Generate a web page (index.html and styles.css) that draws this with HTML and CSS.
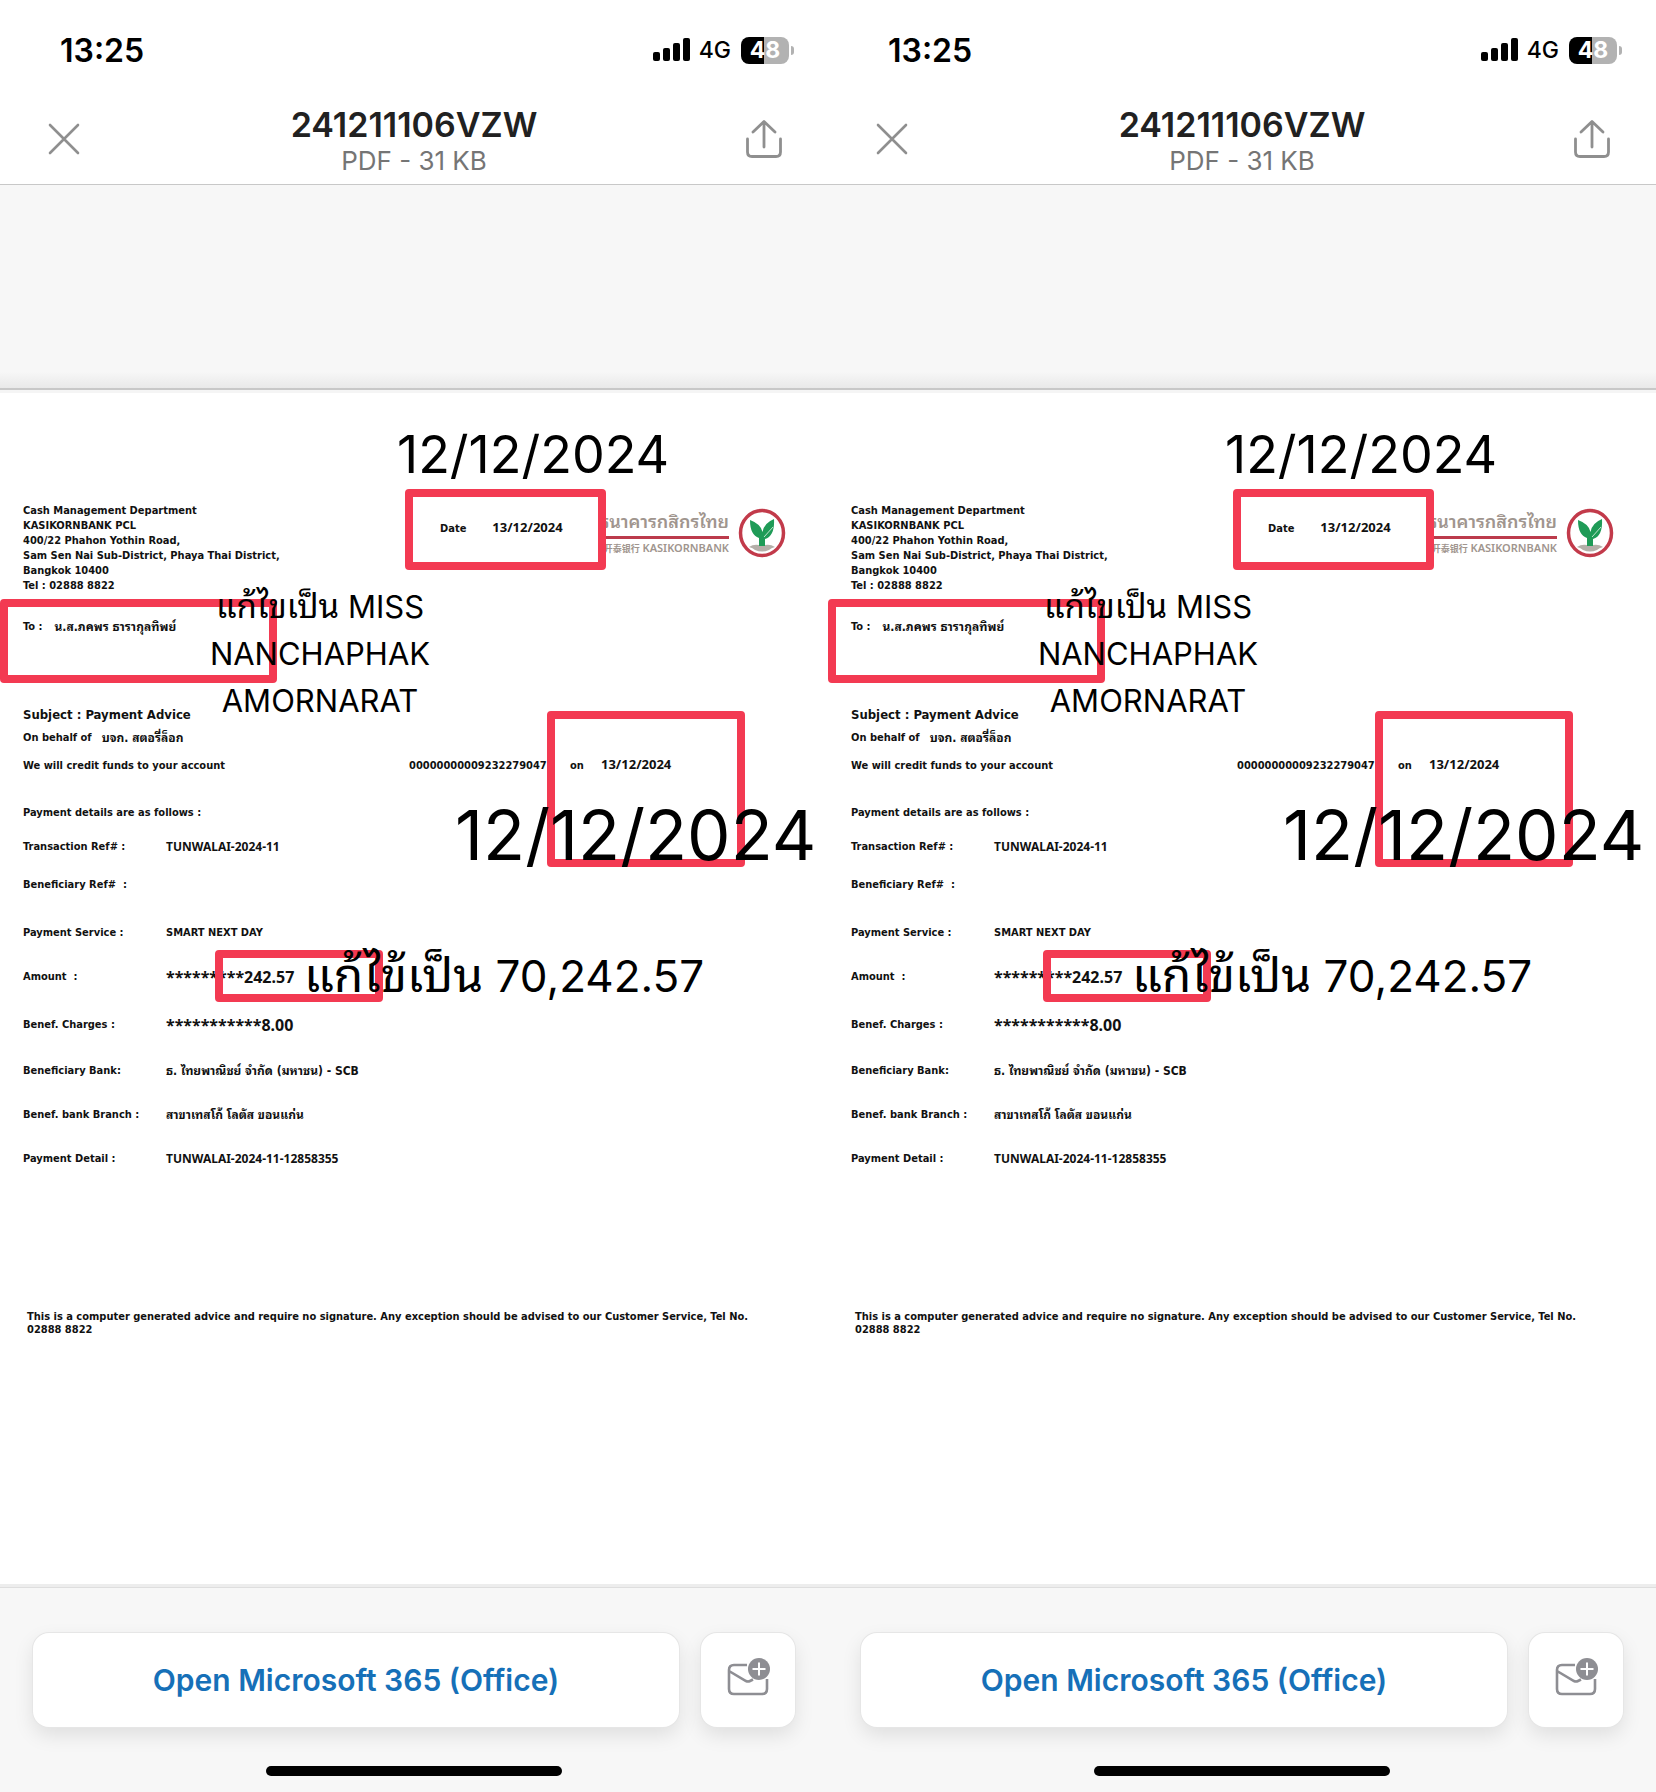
FILE: index.html
```html
<!DOCTYPE html>
<html lang="en">
<head>
<meta charset="utf-8">
<meta name="viewport" content="width=device-width, initial-scale=1">
<title>241211106VZW</title>
<link rel="stylesheet" href="styles.css">
</head>
<body>
<svg class="sprite" aria-hidden="true">
  <symbol id="signal" viewBox="0 0 38 24"><rect x="0" y="14" width="7" height="9" rx="2"/><rect x="10" y="10" width="7" height="13" rx="2"/><rect x="20" y="5" width="7" height="18" rx="2"/><rect x="30" y="0" width="7" height="23" rx="2"/></symbol>
  <symbol id="close" viewBox="0 0 32 32"><path d="M2 2l28 28M30 2L2 30" fill="none" stroke="#8f8f8f" stroke-width="2.6" stroke-linecap="round"/></symbol>
  <symbol id="share" viewBox="0 0 38 40"><path d="M19 28V3M8 13L19 2.500l11 10.500M2.500 20v13q0 4.500 4.500 4.500h24q4.500 0 4.500-4.500V20" fill="none" stroke="#8f8f8f" stroke-width="2.800" stroke-linecap="round" stroke-linejoin="round"/></symbol>
  <symbol id="mail" viewBox="0 0 44 40"><path d="M20 9H7q-5 0-5 5v19q0 5 5 5h28q5 0 5-5V23M2 15l17 10q2 1 4 0l3-1.500" fill="none" stroke="#8e8e93" stroke-width="2.600"/><circle cx="32" cy="13" r="11" fill="#8e8e93"/><path d="M32 6.500v13M25.500 13h13" stroke="#fff" stroke-width="2"/></symbol>
  <symbol id="leaf" viewBox="0 0 48 50"><ellipse cx="24" cy="25" rx="21.500" ry="22.500" fill="#fff" stroke="#c23a4a" stroke-width="3.500"/><path d="M11 39q6-4 13-1 7-3 13 1-4 1-6 3-7 3-14 0-2-2-6-3z" fill="#b5afa9"/><path d="M21 38V30Q12 27 12 12q11 4 12.500 12Q26 15 36 11q1 17-9 20v7z" fill="#1f9b57"/><path d="M26 29l9-10" stroke="#bfe5cd" stroke-width="1"/></symbol>
</svg>
<main class="screens">
  <section class="phone">
    <div class="status">
      <span class="time">13:25</span>
      <span class="indicators"><svg class="signal"><use href="#signal"/></svg><span class="network">4G</span><span class="battery">48</span></span>
    </div>
    <header class="titlebar">
      <button class="icon-button" type="button" aria-label="Close"><svg class="close"><use href="#close"/></svg></button>
      <div class="heading"><h1>241211106VZW</h1><p>PDF - 31 KB</p></div>
      <button class="icon-button" type="button" aria-label="Share"><svg class="share"><use href="#share"/></svg></button>
    </header>
    <div class="gap"></div>
    <article class="doc">
      <div class="letterhead">
        <address>Cash Management Department<br>KASIKORNBANK PCL<br>400/22 Phahon Yothin Road,<br>Sam Sen Nai Sub-District, Phaya Thai District,<br>Bangkok 10400<br>Tel : 02888 8822</address>
        <p class="date"><span>Date</span><span class="day">13/12/2024</span></p>
        <div class="bank">
          <div class="bank-name"><strong>ธนาคารกสิกรไทย</strong><span><small>开泰银行</small> KASIKORNBANK</span></div>
          <svg class="leaf"><use href="#leaf"/></svg>
        </div>
      </div>
      <p class="to"><span>To :</span><span class="thai">น.ส.ภคพร ธารากุลทิพย์</span></p>
      <h2>Subject : Payment Advice</h2>
      <p class="behalf"><span>On behalf of</span><span class="thai">บจก. สตอรี่ล็อก</span></p>
      <p class="credit"><span>We will credit funds to your account</span><span>00000000009232279047</span><span>on</span><span class="day">13/12/2024</span></p>
      <p class="intro">Payment details are as follows :</p>
      <table>
        <tr class="first"><th scope="row">Transaction Ref# :</th><td class="code">TUNWALAI-2024-11</td></tr>
        <tr><th scope="row">Beneficiary Ref#&nbsp; :</th><td></td></tr>
        <tr class="tall"><th scope="row">Payment Service :</th><td>SMART NEXT DAY</td></tr>
        <tr class="mid"><th scope="row">Amount&nbsp; :</th><td class="sum">*********242.57</td></tr>
        <tr class="tall"><th scope="row">Benef. Charges :</th><td class="sum">***********8.00</td></tr>
        <tr class="high"><th scope="row">Beneficiary Bank:</th><td class="thai">ธ. ไทยพาณิชย์ จำกัด (มหาชน) - SCB</td></tr>
        <tr class="mid"><th scope="row">Benef. bank Branch :</th><td class="thai">สาขาเทสโก้ โลตัส ขอนแก่น</td></tr>
        <tr class="mid"><th scope="row">Payment Detail :</th><td class="code">TUNWALAI-2024-11-12858355</td></tr>
      </table>
      <p class="notice">This is a computer generated advice and require no signature. Any exception should be advised to our Customer Service, Tel No. 02888 8822</p>
      <div class="box box-date"></div><div class="box box-to"></div><div class="box box-credit"></div><div class="box box-amount"></div>
      <p class="note note-date">12/12/2024</p>
      <p class="note note-to"><span>แก้ไขเป็น</span> MISS<br>NANCHAPHAK<br>AMORNARAT</p>
      <p class="note note-credit">12/12/2024</p>
      <p class="note note-amount"><span>แก้ไข้เป็น</span> 70,242.57</p>
    </article>
    <footer class="actions">
      <div class="buttons">
        <button class="open" type="button">Open Microsoft 365 (Office)</button>
        <button class="compose" type="button" aria-label="New mail"><svg class="mail"><use href="#mail"/></svg></button>
      </div>
      <div class="home"></div>
    </footer>
  </section>
  <section class="phone">
    <div class="status">
      <span class="time">13:25</span>
      <span class="indicators"><svg class="signal"><use href="#signal"/></svg><span class="network">4G</span><span class="battery">48</span></span>
    </div>
    <header class="titlebar">
      <button class="icon-button" type="button" aria-label="Close"><svg class="close"><use href="#close"/></svg></button>
      <div class="heading"><h1>241211106VZW</h1><p>PDF - 31 KB</p></div>
      <button class="icon-button" type="button" aria-label="Share"><svg class="share"><use href="#share"/></svg></button>
    </header>
    <div class="gap"></div>
    <article class="doc">
      <div class="letterhead">
        <address>Cash Management Department<br>KASIKORNBANK PCL<br>400/22 Phahon Yothin Road,<br>Sam Sen Nai Sub-District, Phaya Thai District,<br>Bangkok 10400<br>Tel : 02888 8822</address>
        <p class="date"><span>Date</span><span class="day">13/12/2024</span></p>
        <div class="bank">
          <div class="bank-name"><strong>ธนาคารกสิกรไทย</strong><span><small>开泰银行</small> KASIKORNBANK</span></div>
          <svg class="leaf"><use href="#leaf"/></svg>
        </div>
      </div>
      <p class="to"><span>To :</span><span class="thai">น.ส.ภคพร ธารากุลทิพย์</span></p>
      <h2>Subject : Payment Advice</h2>
      <p class="behalf"><span>On behalf of</span><span class="thai">บจก. สตอรี่ล็อก</span></p>
      <p class="credit"><span>We will credit funds to your account</span><span>00000000009232279047</span><span>on</span><span class="day">13/12/2024</span></p>
      <p class="intro">Payment details are as follows :</p>
      <table>
        <tr class="first"><th scope="row">Transaction Ref# :</th><td class="code">TUNWALAI-2024-11</td></tr>
        <tr><th scope="row">Beneficiary Ref#&nbsp; :</th><td></td></tr>
        <tr class="tall"><th scope="row">Payment Service :</th><td>SMART NEXT DAY</td></tr>
        <tr class="mid"><th scope="row">Amount&nbsp; :</th><td class="sum">*********242.57</td></tr>
        <tr class="tall"><th scope="row">Benef. Charges :</th><td class="sum">***********8.00</td></tr>
        <tr class="high"><th scope="row">Beneficiary Bank:</th><td class="thai">ธ. ไทยพาณิชย์ จำกัด (มหาชน) - SCB</td></tr>
        <tr class="mid"><th scope="row">Benef. bank Branch :</th><td class="thai">สาขาเทสโก้ โลตัส ขอนแก่น</td></tr>
        <tr class="mid"><th scope="row">Payment Detail :</th><td class="code">TUNWALAI-2024-11-12858355</td></tr>
      </table>
      <p class="notice">This is a computer generated advice and require no signature. Any exception should be advised to our Customer Service, Tel No. 02888 8822</p>
      <div class="box box-date"></div><div class="box box-to"></div><div class="box box-credit"></div><div class="box box-amount"></div>
      <p class="note note-date">12/12/2024</p>
      <p class="note note-to"><span>แก้ไขเป็น</span> MISS<br>NANCHAPHAK<br>AMORNARAT</p>
      <p class="note note-credit">12/12/2024</p>
      <p class="note note-amount"><span>แก้ไข้เป็น</span> 70,242.57</p>
    </article>
    <footer class="actions">
      <div class="buttons">
        <button class="open" type="button">Open Microsoft 365 (Office)</button>
        <button class="compose" type="button" aria-label="New mail"><svg class="mail"><use href="#mail"/></svg></button>
      </div>
      <div class="home"></div>
    </footer>
  </section>
</main>
</body>
</html>
```
FILE: styles.css
```css
* { box-sizing: border-box; margin: 0; padding: 0; }
body { background: #fff; color: #000; font-family: Inter, "Noto Sans Thai Looped", Loma, "Noto Sans Thai", "Noto Sans", sans-serif; }
button { border: 0; background: none; font: inherit; }
svg { display: block; flex: none; }
.sprite { position: absolute; width: 0; height: 0; }
.screens { display: grid; grid-template-columns: 1fr 1fr; min-height: 100vh; }
.phone { display: flex; flex-direction: column; min-width: 0; overflow: hidden; }

.status { display: flex; align-items: center; justify-content: space-between; height: 100px; padding: 0 34px 0 60px; }
.time { font-size: 32px; font-weight: 600; }
.indicators { display: flex; align-items: center; }
.signal { width: 38px; height: 24px; margin-right: 8px; }
.network { font-size: 23px; font-weight: 500; margin-right: 10px; }
.battery { position: relative; width: 48px; height: 27px; margin-right: 5px; border-radius: 8px; background: linear-gradient(90deg, #000 48%, #b2b2b2 48%); color: #fff; font-size: 23px; font-weight: 700; line-height: 27px; text-align: center; }
.battery::after { content: ""; position: absolute; left: 50px; top: 9px; width: 3px; height: 9px; border-radius: 0 4px 4px 0; background: #b2b2b2; }

.titlebar { display: flex; align-items: center; justify-content: space-between; height: 85px; padding: 0 45px 6px; border-bottom: 1px solid #c8c8c8; }
.icon-button { display: flex; justify-content: center; width: 38px; }
.close { width: 32px; height: 32px; }
.share { width: 38px; height: 40px; }
.heading { padding-top: 3px; text-align: center; }
.heading h1 { color: #212121; font-size: 34px; font-weight: 600; line-height: 40px; }
.heading p { color: #757575; font-size: 26px; line-height: 32px; }

.gap { height: 205px; background: linear-gradient(#f7f7f7 92%, #e9e9e9); border-bottom: 2px solid #c8c8c8; }
.doc { position: relative; flex: 1; padding: 110px 23px 0; border-top: 3px solid #f5f5f5; font-family: "DejaVu Sans Condensed", "Noto Sans Thai Looped", Loma, "Noto Sans Thai", "Noto Sans CJK SC", sans-serif; font-size: 11px; font-weight: 700; line-height: 16px; color: #111; }
.thai { font-size: 12px; }
.day { font-family: "Noto Sans", sans-serif; font-size: 13px; }
.code { font-family: "Noto Sans", sans-serif; font-size: 12px; }
.letterhead { display: grid; grid-template-columns: 417px 1fr auto; height: 90px; }
address { font-style: normal; line-height: 15px; }
.date { display: flex; align-items: baseline; gap: 26px; padding-top: 16px; }
.bank { display: flex; gap: 9px; margin-right: 19px; height: 60px; align-items: center; }
.bank-name { display: flex; flex-direction: column; align-items: flex-end; color: #a0958e; }
.bank-name strong { border-bottom: 3px solid #bc3b4c; font-size: 18px; font-weight: 600; line-height: 28px; }
.bank-name span { font-family: "Noto Sans", "Noto Sans CJK SC", sans-serif; font-size: 11px; line-height: 18px; font-weight: 600; }
.bank-name small { font-size: 9px; }
.leaf { width: 48px; height: 50px; }
.to { display: flex; gap: 12px; margin-top: 26px; }
h2 { margin-top: 71px; font-size: 13px; line-height: 18px; }
.behalf { display: flex; gap: 10px; margin-top: 6px; }
.credit { display: grid; grid-template-columns: 386px 161px 31px 1fr; align-items: baseline; margin-top: 10px; }
.intro { margin-top: 31px; }
table { width: 100%; border-collapse: collapse; margin-top: 2px; }
tr { height: 38px; }
tr.first { height: 32px; }
tr.mid { height: 44px; }
tr.high { height: 46px; }
tr.tall { height: 48px; }
th, td { vertical-align: bottom; text-align: left; font-weight: 700; }
th { width: 143px; }
.sum { font-family: "Noto Sans", sans-serif; font-size: 16px; }
.notice { padding: 0 32px 0 4px; margin-top: 143px; line-height: 13px; }

.box { position: absolute; border: 8px solid #f33a52; border-radius: 4px; }
.box-date { left: 405px; top: 96px; width: 201px; height: 81px; }
.box-to { left: 0; top: 206px; width: 277px; height: 84px; }
.box-credit { left: 547px; top: 318px; width: 198px; height: 156px; }
.box-amount { left: 215px; top: 557px; width: 168px; height: 52px; }
.note { position: absolute; font-family: Inter, "Noto Sans Thai Looped", Loma, "Noto Sans Thai", "Noto Sans", sans-serif; font-weight: 400; color: #000; white-space: nowrap; }
.note-date { left: 397px; top: 26px; font-size: 52px; line-height: 72px; }
.note-to { left: 200px; width: 240px; top: 190px; font-size: 31px; line-height: 47px; text-align: center; }
.note-to span { font-size: 33px; }
.note-credit { left: 455px; top: 398px; font-size: 69px; line-height: 88px; }
.note-amount { left: 304px; top: 550px; font-size: 44px; line-height: 64px; }
.note-amount span { font-size: 48px; }

.actions { border-top: 3px solid #ededed; background: #f7f7f7; box-shadow: inset 0 1px #dedede; padding: 46px 33px 16px; }
.buttons { display: flex; gap: 22px; }
.open, .compose { height: 94px; border-radius: 16px; background: #fff; box-shadow: 0 0 0 1px #e6e6e6, 0 8px 20px #0000001a; }
.open { flex: 1; color: #1670b8; font-size: 30px; font-weight: 600; }
.compose { display: flex; align-items: center; justify-content: center; width: 94px; }
.mail { width: 44px; height: 40px; margin-bottom: 8px; margin-left: 2px; }
.home { width: 296px; height: 10px; margin: 39px auto 0; border-radius: 5px; background: #000; }
```
